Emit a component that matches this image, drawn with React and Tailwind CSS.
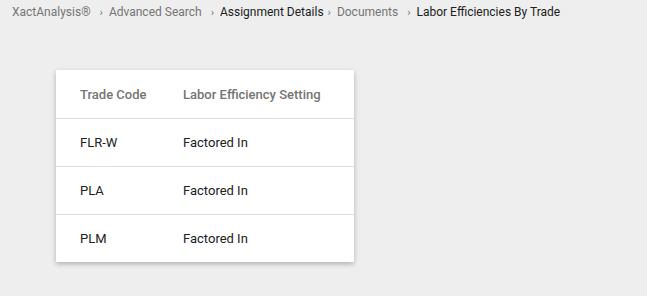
import React from 'react';

const crumbs = [
  { label: 'XactAnalysis®', link: true },
  { label: 'Advanced Search', link: true },
  { label: 'Assignment Details', link: false },
  { label: 'Documents', link: true },
  { label: 'Labor Efficiencies By Trade', link: false },
];

const rows = [
  { code: 'FLR-W', setting: 'Factored In' },
  { code: 'PLA', setting: 'Factored In' },
  { code: 'PLM', setting: 'Factored In' },
];

const Breadcrumbs = () => (
  <nav className="flex items-center h-[24px] px-3 text-[12px] leading-none">
    {crumbs.map((c, i) => (
      <React.Fragment key={c.label}>
        {i > 0 && <span className="text-[#757575] text-[11px] ml-[4px] mr-[6px]">›</span>}
        <span className={c.link ? 'text-[#757575] pr-[5px]' : 'text-[#212121]'}>{c.label}</span>
      </React.Fragment>
    ))}
  </nav>
);

export default function App() {
  return (
    <div className="w-[647px] h-[296px] bg-[#eeeeee] font-['Roboto',sans-serif] overflow-hidden">
      <Breadcrumbs />
      <div className="pl-[56px] pt-[46px]">
        <table className="bg-white w-[298px] table-fixed border-collapse shadow-[0_2px_5px_rgba(0,0,0,0.26)] text-[13px]">
          <colgroup>
            <col className="w-[127px]" />
            <col />
          </colgroup>
          <thead>
            <tr className="h-[48px] border-b border-[#e0e0e0]">
              <th className="text-left font-medium text-[#757575] pl-6 pt-[1px]">Trade Code</th>
              <th className="text-left font-medium text-[#757575] pt-[1px]">Labor Efficiency Setting</th>
            </tr>
          </thead>
          <tbody>
            {rows.map((r, i) => (
              <tr key={r.code} className={`h-[48px] ${i < rows.length - 1 ? 'border-b border-[#e0e0e0]' : ''}`}>
                <td className="pl-6 pt-[1px] text-[#212121]">{r.code}</td>
                <td className="pt-[1px] text-[#212121]">{r.setting}</td>
              </tr>
            ))}
          </tbody>
        </table>
      </div>
    </div>
  );
}
